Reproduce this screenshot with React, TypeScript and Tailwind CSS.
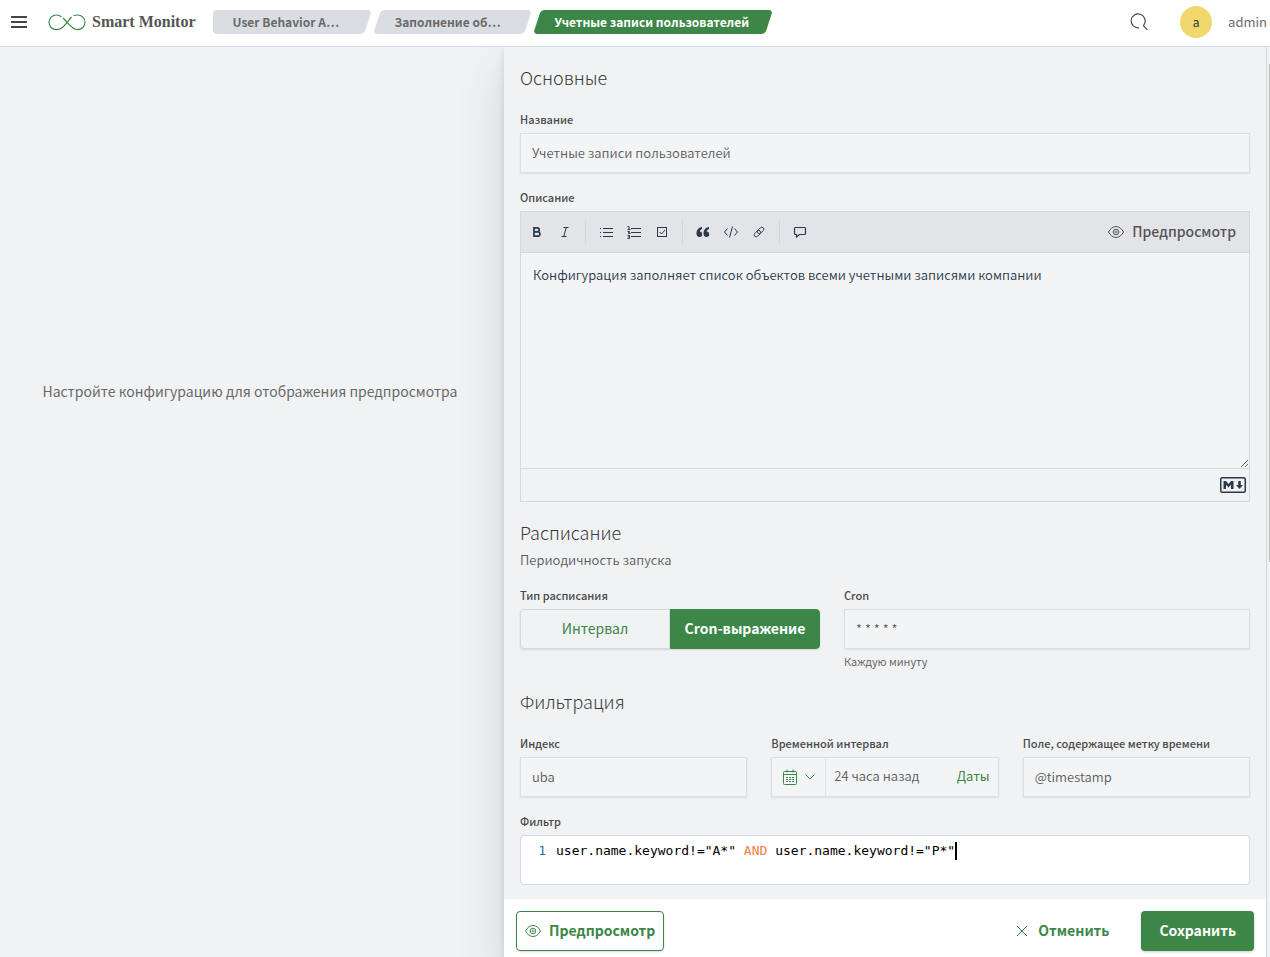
import clsx from "clsx";
import { ReactNode, useState } from "react";

const FIELD = "w-full h-10 px-[11px] pb-[2px] bg-[#f3f4f6] border border-[#d9e0e3] text-[13px] font-[350] text-[#5c5c5c] shadow-[0_1px_2px_rgba(0,0,0,0.08)] outline-none";

/** Wrapper for every 16px line icon */
const Icon = ({ children, className = "size-4" }: { children: ReactNode; className?: string }) => (
  <svg viewBox="0 0 16 16" fill="none" stroke="currentColor" strokeWidth="1" className={clsx("shrink-0", className)} aria-hidden="true">
    {children}
  </svg>
);

const EyeIcon = () => (
  <Icon>
    <path d="M.5 8C2.2 4.800 4.800 2.500 8 2.500S13.800 4.800 15.500 8C13.800 11.200 11.200 13.500 8 13.500S2.200 11.200.5 8z" />
    <circle cx="8" cy="8" r="2.800" />
    <circle cx="8" cy="8" r="1" strokeWidth="0.800" />
  </Icon>
);

const LogoIcon = () => (
  <svg viewBox="0 0 38 17" fill="none" stroke="#3c8747" strokeWidth="1.200" className="w-[38px] h-[17px] shrink-0" aria-hidden="true">
    <path d="M13.500 3C12 1.500 10.300 1 8.500 1 4.200 1 1 4.200 1 8.300S4.200 15.700 8.500 15.700C15.500 15.700 18.500 8 23.500 3" />
    <path d="M25.500 1.700C26.700 1.200 28 1 29.500 1 33.800 1 37 4.200 37 8.300S33.800 15.700 29.500 15.700C24 15.700 20.500 9 15 4" />
  </svg>
);

const MarkdownIcon = () => (
  <svg viewBox="0 0 26 16" className="w-[26px] h-4" aria-hidden="true">
    <rect x="0.750" y="0.750" width="24.500" height="14.500" rx="1.500" fill="none" stroke="#2b394b" strokeWidth="1.500" />
    <path d="M3.500 12V4H6l2.500 3L11 4h2.500v8H11V7.700L8.500 10.500 6 7.700V12zM18.200 4h2.600v4H23l-3.500 4L16 8h2.200z" fill="#2b394b" />
  </svg>
);

const TOOLBAR_GROUPS: { label: string; icon: ReactNode }[][] = [
  [
    {
      label: "Жирный",
      icon: <path d="M5 3v10M5 3.800h3.200a2 2 0 0 1 0 4H5M5 7.800h3.700a2.200 2.200 0 0 1 0 4.400H5" strokeWidth="1.700" />,
    },
    { label: "Курсив", icon: <path d="M6.500 3.500h5M4.500 12.500h5M9.200 3.500l-2.400 9" /> },
  ],
  [
    { label: "Список", icon: <path d="M5 4.500h10M5 8.500h10M5 12.500h10M2 4.500h1M2 8.500h1M2 12.500h1" /> },
    {
      label: "Нумерованный список",
      icon: (
        <>
          <path d="M5 4.500h10M5 8.500h10M5 12.500h10" strokeWidth="1.200" />
          <path d="M1.500 2.500H3V5.500M1.500 5.500h3M1.500 7.500h2v1h-1v1h2M1.500 11.500h2v3h-2M2 13h1.500" />
        </>
      ),
    },
    {
      label: "Список задач",
      icon: (
        <>
          <rect x="3.500" y="3.500" width="9" height="9" />
          <path d="M5.500 8l2 2 3.500-4" />
        </>
      ),
    },
  ],
  [
    {
      label: "Цитата",
      icon: (
        <path
          d="M7 3C3.500 3.500 1.500 6 1.500 9.500c0 2.200 1.200 3.500 2.900 3.500A2.700 2.700 0 0 0 7.200 10.300c0-1.500-1-2.600-2.500-2.700C4.900 6.300 5.700 5.400 7 5zM14 3c-3.500.5-5.500 3-5.500 6.500 0 2.200 1.200 3.500 2.900 3.500a2.700 2.700 0 0 0 2.800-2.700c0-1.500-1-2.600-2.500-2.700.2-1.300 1-2.200 2.300-2.600z"
          fill="currentColor"
          stroke="none"
        />
      ),
    },
    { label: "Код", icon: <path d="M4.500 4.500 1.500 8l3 3.500M11.500 4.500l3 3.500-3 3.500M9.500 2.500l-3 11" /> },
    {
      label: "Ссылка",
      icon: (
        <g transform="rotate(-45 8 8)" strokeWidth="0.900">
          <rect x="2" y="6" width="7.500" height="4" rx="2" />
          <rect x="6.500" y="6" width="7.500" height="4" rx="2" />
        </g>
      ),
    },
  ],
  [
    {
      label: "Комментарий",
      icon: <path d="M3.500 3.500h9a1 1 0 0 1 1 1v5a1 1 0 0 1-1 1H7.500L4.500 13v-2.500h-1a1 1 0 0 1-1-1v-5a1 1 0 0 1 1-1z" strokeWidth="1.200" />,
    },
  ],
];

const Crumb = ({ children, first, active }: { children: ReactNode; first?: boolean; active?: boolean }) => (
  <li
    className={clsx(
      "relative h-6 flex items-center text-xs font-semibold",
      "before:absolute before:inset-y-0 before:right-0 before:rounded before:-skew-x-[18deg]",
      first ? "w-[155px] pl-5 before:left-5 after:absolute after:inset-y-0 after:left-0 after:right-5 after:rounded after:bg-[#dadde2]" : "pl-[18px] before:left-0",
      active ? "w-[232px] text-white before:bg-[#3c8747]" : "text-[#6a6a6a] before:bg-[#dadde2]",
      !first && !active && "w-[151px]"
    )}
  >
    <a href="#" className="relative z-10 whitespace-nowrap">
      {children}
    </a>
  </li>
);

const Header = () => (
  <header className="flex items-center h-[47px] shrink-0 bg-white border-b border-[#d3dae0] pl-[11px] pr-[3px]">
    <button type="button" aria-label="Меню" className="-mt-[2px] text-[#444]">
      <Icon>
        <path d="M0 3h16M0 8h16M0 13h16" strokeWidth="1.800" />
      </Icon>
    </button>
    <a href="#" className="flex items-center gap-[6px] ml-[21px] -mt-[2px]">
      <LogoIcon />
      <span className="font-['Liberation_Serif',serif] font-bold text-base text-[#555]">Smart Monitor</span>
    </a>
    <nav aria-label="Навигация" className="ml-[17px] -mt-[2px]">
      <ol className="flex gap-[9px]">
        <Crumb first>User Behavior A…</Crumb>
        <Crumb>Заполнение об…</Crumb>
        <Crumb active>Учетные записи пользователей</Crumb>
      </ol>
    </nav>
    <div className="ml-auto -mt-[2px] flex items-center">
      <button type="button" aria-label="Поиск" className="text-[#444]">
        <Icon className="size-[18px]">
          <path d="M8 13.200A6.200 6.200 0 1 1 12.500 10.300L12 11.500 15.500 15" />
        </Icon>
      </button>
      <span className="ml-8 size-8 rounded-full bg-[#f0d86e] flex items-center justify-center pb-px text-xs text-[#333]">a</span>
      <span className="ml-4 text-[13px] text-[#6a6a6a]">admin</span>
    </div>
  </header>
);

const Field = ({ label, htmlFor, help, children }: { label: string; htmlFor: string; help?: string; children: ReactNode }) => (
  <div>
    <label htmlFor={htmlFor} className="block pb-[6px] text-[11px] leading-4 font-medium text-[#4a4a4a]">
      {label}
    </label>
    {children}
    {help && <p className="pt-1 pb-[2px] text-[11px] leading-4 font-[350] text-[#5c5c5c]">{help}</p>}
  </div>
);

const Title = ({ children }: { children: ReactNode }) => <h2 className="pb-1 text-lg leading-7 font-light text-[#3a3a3a]">{children}</h2>;

/** Markdown editor with its toolbar and footer */
const DescriptionEditor = () => (
  <div className="border border-[#d5d8dd]">
    <div className="flex items-center h-10 pl-1 pr-[13px] bg-[#e3e4e8] text-[#2b394b]">
      {TOOLBAR_GROUPS.map((group, index) => (
        <div key={index} className={clsx("flex items-center gap-1 h-6", index > 0 && "ml-2 pl-2 border-l border-[#d3d5da]")}>
          {group.map(({ label, icon }) => (
            <button key={label} type="button" aria-label={label} className="size-6 flex items-center justify-center">
              <Icon>{icon}</Icon>
            </button>
          ))}
        </div>
      ))}
      <button type="button" className="ml-auto flex items-center gap-2 text-sm font-medium text-[#555]">
        <EyeIcon />
        <span className="pb-[2px]">Предпросмотр</span>
      </button>
    </div>
    <textarea
      id="description"
      className="block w-full h-[217px] resize-y px-3 py-3 bg-[#f3f4f6] border-y border-[#d5d8dd] text-[13px] leading-5 font-[350] text-[#2b394b] outline-none"
      defaultValue="Конфигурация заполняет список объектов всеми учетными записями компании"
    />
    <div className="flex items-center justify-end h-8 pr-[3px]">
      <MarkdownIcon />
    </div>
  </div>
);

const ScheduleSwitch = () => {
  const [type, setType] = useState("Cron-выражение");

  return (
    <div id="schedule-type" role="group" className="grid grid-cols-2 h-10 rounded shadow-[0_1px_2px_rgba(0,0,0,0.12)]">
      {["Интервал", "Cron-выражение"].map((option) => (
        <button
          key={option}
          type="button"
          aria-pressed={type === option}
          onClick={() => setType(option)}
          className={clsx(
            "border pb-[2px] text-sm first:rounded-l last:rounded-r",
            type === option ? "bg-[#3c8747] border-[#3c8747] text-white font-semibold" : "border-[#d3d9df] text-[#3c8747]"
          )}
        >
          {option}
        </button>
      ))}
    </div>
  );
};

const DateRange = () => (
  <div className="flex h-10 bg-[#f3f4f6] border border-[#d9e0e3] text-[13px] font-[350] text-[#5c5c5c] shadow-[0_1px_2px_rgba(0,0,0,0.08)]">
    <button type="button" aria-label="Быстрый выбор" className="flex items-center gap-1 px-[10px] w-[54px] border-r border-[#e0e4e8] text-[#3c8747]">
      <Icon>
        <rect x="1.500" y="2.500" width="13" height="13" rx="1" />
        <path d="M1.500 5.500h13M5 .5v3M11 .5v3" />
        <path d="M4 8.500h9M4 10.500h9M4 12.500h9" strokeDasharray="2 1" />
      </Icon>
      <Icon>
        <path d="M3.500 5.500 8 10l4.500-4.500" />
      </Icon>
    </button>
    <button id="interval" type="button" className="flex-1 flex items-center justify-between px-2 pb-[2px]">
      24 часа назад
      <span className="font-normal text-[#3c8747]">Даты</span>
    </button>
  </div>
);

const FilterEditor = () => (
  <div className="flex h-[50px] pt-[6px] bg-white border border-[#d3dae6] rounded font-['DejaVu_Sans_Mono',monospace] text-[13px] leading-[18px]">
    <span className="w-[25px] text-right text-[#237893]">1</span>
    <div id="filter" role="textbox" aria-label="Фильтр" className="ml-[10px] flex whitespace-pre text-black">
      user.name.keyword!="A*" <span className="text-[#f5803e]">AND</span> user.name.keyword!="P*"
      <span className="w-[2px] h-[18px] bg-black" />
    </div>
  </div>
);

const Footer = () => (
  <footer className="flex items-center shrink-0 h-[58px] px-3 pt-3 pb-[6px] bg-white text-sm font-semibold text-[#3c8747]">
    <button type="button" className="flex items-center gap-2 h-10 px-2 border border-[#3c8747] rounded shadow-[0_1px_2px_rgba(0,0,0,0.15)]">
      <EyeIcon />
      <span className="pb-[2px]">Предпросмотр</span>
    </button>
    <button type="button" className="ml-auto flex items-center gap-2 h-10 px-2">
      <Icon>
        <path d="M3 3l10 10M13 3 3 13" />
      </Icon>
      <span className="pb-[2px]">Отменить</span>
    </button>
    <button type="button" className="ml-6 h-10 px-[18px] pb-[2px] rounded bg-[#3c8747] text-white shadow-[0_1px_3px_rgba(0,0,0,0.2)]">
      Сохранить
    </button>
  </footer>
);

export default function App() {
  return (
    <div className="flex flex-col h-screen bg-[#f0f2f4] font-['Noto_Sans_CJK_SC','Noto_Sans',sans-serif]">
      <Header />
      <div className="flex flex-1 min-h-0 overflow-hidden">
        <section className="flex-1 pt-[332px] pr-1 text-center text-sm leading-6 text-[#6a6a6a]">
          Настройте конфигурацию для отображения предпросмотра
        </section>
        <main className="w-3/5 flex flex-col bg-[#f0f2f4] shadow-[0_24px_44px_rgba(65,90,105,0.16),0_4px_8px_rgba(65,78,101,0.18)]">
          <form className="flex-1 min-h-0 overflow-hidden p-4 space-y-4">
            <Title>Основные</Title>
            <Field label="Название" htmlFor="name">
              <input id="name" className={FIELD} defaultValue="Учетные записи пользователей" />
            </Field>
            <Field label="Описание" htmlFor="description">
              <DescriptionEditor />
            </Field>
            <div>
              <Title>Расписание</Title>
              <p className="pb-px text-[13px] leading-5 font-[350] text-[#5c5c5c]">Периодичность запуска</p>
            </div>
            <div className="grid grid-cols-[300px_1fr] gap-6">
              <Field label="Тип расписания" htmlFor="schedule-type">
                <ScheduleSwitch />
              </Field>
              <Field label="Cron" htmlFor="cron" help="Каждую минуту">
                <input id="cron" className={FIELD} defaultValue="* * * * *" />
              </Field>
            </div>
            <Title>Фильтрация</Title>
            <div className="grid grid-cols-3 gap-6">
              <Field label="Индекс" htmlFor="index">
                <input id="index" className={FIELD} defaultValue="uba" />
              </Field>
              <Field label="Временной интервал" htmlFor="interval">
                <DateRange />
              </Field>
              <Field label="Поле, содержащее метку времени" htmlFor="timestamp">
                <input id="timestamp" className={FIELD} defaultValue="@timestamp" />
              </Field>
            </div>
            <Field label="Фильтр" htmlFor="filter">
              <FilterEditor />
            </Field>
          </form>
          <Footer />
        </main>
        {/* Scroll track */}
        <div className="relative w-1 bg-[#f0f2f4] border-l border-[#d3d6db] flex justify-end pt-[17px]">
          <div className="w-px h-[498px] bg-[#b8b8b8]" />
        </div>
      </div>
    </div>
  );
}
